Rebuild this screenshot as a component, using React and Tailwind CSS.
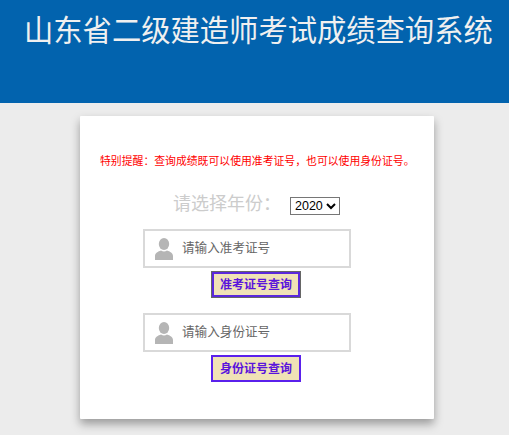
const sans = 'font-["Liberation_Sans","Noto_Sans_CJK_SC",sans-serif]'

function UserIcon() {
  return (
    <svg width="18" height="22" viewBox="0 0 18 22" fill="#b5b5b5">
      <ellipse cx="9" cy="6" rx="5.2" ry="6" />
      <path d="M0 22v-4c0-3 3-4.500 6-5.500 2 1.400 4 1.400 6 0 3 1 6 2.500 6 5.500v4z" />
    </svg>
  )
}

function QueryRow({ placeholder, button, focused }) {
  return (
    <div className="flex flex-col">
      <div className="ml-[63px] w-[208px] h-[39px] border-2 border-[#d9d9d9] bg-white flex items-center pl-[10px]">
        <UserIcon />
        <span className="ml-[9px] text-[12.6px] leading-none text-[#666666] whitespace-nowrap">{placeholder}</span>
      </div>
      <button
        className={
          focused
            ? 'ml-[131px] mt-[3px] w-[90px] h-[27px] bg-[#f0e2b6] border border-[#666] shadow-[inset_0_0_0_2px_#5a28dc] text-[12px] font-bold text-[#5a14dc] flex items-center justify-center'
            : 'ml-[131px] mt-[3px] w-[90px] h-[27px] bg-[#f0e2b6] border-2 border-[#5a20ec] text-[12px] font-bold text-[#5a14dc] flex items-center justify-center'
        }
      >
        {button}
      </button>
    </div>
  )
}

export default function App() {
  return (
    <div className={`w-[509px] h-[435px] overflow-hidden bg-[#ececec] ${sans}`}>
      <header className="h-[103px] bg-[#0263ae] pl-[24px] pt-[12px]">
        <h1 className="text-[29.300px] leading-[38px] text-[#f0f0f0] whitespace-nowrap">
          山东省二级建造师考试成绩查询系统
        </h1>
      </header>

      <main className="ml-[80px] mt-[13px] w-[354px] h-[303px] bg-white shadow-[0_5px_10px_rgba(0,0,0,0.35)] rounded-[1px] flex flex-col">
        <p className="mt-[38px] ml-[20px] text-[10.85px] leading-[14px] text-[#ff0000] whitespace-nowrap">
          特别提醒：查询成绩既可以使用准考证号，也可以使用身份证号。
        </p>

        <div className="mt-[23px] ml-[93px] flex items-center h-[26px]">
          <span className="text-[18px] text-[#cccccc] whitespace-nowrap">请选择年份：</span>
          <select className="ml-[9px] mt-[3px] border border-[#767676] bg-white text-[12.5px] text-black">
            <option>2020</option>
          </select>
        </div>

        <div className="mt-[12px]">
          <QueryRow placeholder="请输入准考证号" button="准考证号查询" focused />
        </div>
        <div className="mt-[15px]">
          <QueryRow placeholder="请输入身份证号" button="身份证号查询" />
        </div>
      </main>
    </div>
  )
}
